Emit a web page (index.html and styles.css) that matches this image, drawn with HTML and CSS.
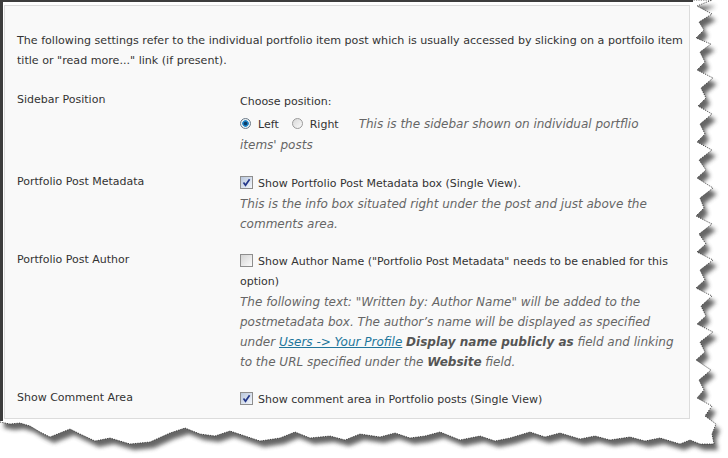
FILE: index.html
```html
<!DOCTYPE html>
<html>
<head>
<meta charset="utf-8">
<link rel="stylesheet" href="styles.css">
</head>
<body>
<svg class="torn" width="728" height="458" viewBox="0 0 728 458">
  <defs>
    <filter id="blur" x="-10%" y="-10%" width="120%" height="120%">
      <feGaussianBlur stdDeviation="2.2"/>
    </filter>
  </defs>
  <path class="shadow" filter="url(#blur)" transform="translate(4,6)" d="M0,0 L712,0 L697,6 L712,14 L699,22 L704,30 L696,38 L711,44 L700,52 L705,62 L697,70 L713,78 L701,88 L706,98 L698,106 L712,114 L700,124 L705,134 L697,142 L712,150 L699,160 L706,170 L697,178 L713,188 L700,198 L704,208 L696,216 L712,224 L699,234 L706,244 L697,252 L713,260 L700,270 L705,280 L696,288 L712,296 L701,306 L706,316 L697,324 L713,332 L700,342 L705,352 L696,360 L711,370 L699,380 L704,390 L697,398 L712,406 L705,416 L716,424 L712,434 L714,444 L700,444 L690,440 L680,444 L660,438 L645,441 L630,437 L610,440 L595,436 L580,439 L560,433 L545,437 L530,432 L510,438 L495,441 L480,436 L460,440 L440,432 L425,436 L410,438 L395,433 L380,437 L360,434 L345,440 L330,436 L310,438 L295,432 L280,438 L260,441 L245,436 L230,431 L215,436 L200,434 L185,428 L170,433 L150,442 L130,444 L110,438 L95,441 L80,434 L70,429 L60,433 L50,437 L40,432 L30,426 L20,423 L10,424 L0,422 Z"/>
  <path class="paper" d="M0,0 L712,0 L697,6 L712,14 L699,22 L704,30 L696,38 L711,44 L700,52 L705,62 L697,70 L713,78 L701,88 L706,98 L698,106 L712,114 L700,124 L705,134 L697,142 L712,150 L699,160 L706,170 L697,178 L713,188 L700,198 L704,208 L696,216 L712,224 L699,234 L706,244 L697,252 L713,260 L700,270 L705,280 L696,288 L712,296 L701,306 L706,316 L697,324 L713,332 L700,342 L705,352 L696,360 L711,370 L699,380 L704,390 L697,398 L712,406 L705,416 L716,424 L712,434 L714,444 L700,444 L690,440 L680,444 L660,438 L645,441 L630,437 L610,440 L595,436 L580,439 L560,433 L545,437 L530,432 L510,438 L495,441 L480,436 L460,440 L440,432 L425,436 L410,438 L395,433 L380,437 L360,434 L345,440 L330,436 L310,438 L295,432 L280,438 L260,441 L245,436 L230,431 L215,436 L200,434 L185,428 L170,433 L150,442 L130,444 L110,438 L95,441 L80,434 L70,429 L60,433 L50,437 L40,432 L30,426 L20,423 L10,424 L0,422 Z"/>
</svg>

<div class="frame">
  <div class="panel">
    <p class="intro">The following settings refer to the individual portfolio item post which is usually accessed by slicking on a portfoilo item title or "read more..." link (if present).</p>

    <div class="form">
      <div class="label">Sidebar Position</div>
      <div class="value">
        <div class="choose">Choose position:</div>
        <div class="radios"><span class="rd on"></span><span class="rlabel">Left</span><span class="rd"></span><span class="rlabel">Right</span><span class="desc inline">This is the sidebar shown on individual portflio items' posts</span></div>
      </div>

      <div class="label">Portfolio Post Metadata</div>
      <div class="value">
        <div><span class="cb on"><svg width="11" height="11" viewBox="0 0 11 11"><path d="M2.5 5.5 L4.5 8.2 L8.6 2.3" fill="none" stroke="#23378a" stroke-width="1.7"/></svg></span>Show Portfolio Post Metadata box (Single View).</div>
        <div class="desc">This is the info box situated right under the post and just above the comments area.</div>
      </div>

      <div class="label">Portfolio Post Author</div>
      <div class="value">
        <div><span class="cb"></span>Show Author Name ("Portfolio Post Metadata" needs to be enabled for this option)</div>
        <div class="desc">The following text: "Written by: Author Name" will be added to the postmetadata box. The author’s name will be displayed as specified under <a href="#">Users -&gt; Your Profile</a> <b>Display name publicly as</b> field and linking to the URL specified under the <b>Website</b> field.</div>
      </div>

      <div class="label">Show Comment Area</div>
      <div class="value">
        <div><span class="cb on"><svg width="11" height="11" viewBox="0 0 11 11"><path d="M2.5 5.5 L4.5 8.2 L8.6 2.3" fill="none" stroke="#23378a" stroke-width="1.7"/></svg></span>Show comment area in Portfolio posts (Single View)</div>
      </div>
    </div>
  </div>
</div>
</body>
</html>
```

FILE: styles.css
```css
html, body {
  margin: 0;
  padding: 0;
  background: #fff;
}

body {
  position: relative;
  width: 728px;
  height: 458px;
  overflow: hidden;
  font-family: "DejaVu Sans", Verdana, sans-serif;
  font-size: 11px;
  line-height: 20px;
  color: #333;
}

.torn {
  position: absolute;
  left: 0;
  top: 0;
  z-index: 0;
}

.torn .shadow {
  fill: #555;
  opacity: 0.9;
}

.torn .paper {
  fill: #fff;
  stroke: #2a2a2a;
  stroke-width: 0.8;
  stroke-dasharray: 1.2 1.2;
}

.frame {
  position: relative;
  z-index: 1;
  width: 693px;
  height: 421px;
  border-top: 2px solid #3d3d3d;
  border-left: 3px solid #3d3d3d;
  padding: 3px 0 0 1px;
  box-sizing: border-box;
}

.panel {
  width: 686px;
  height: 414px;
  box-sizing: border-box;
  background: #f9f9f9;
  border: 1px solid #dcdcdc;
  padding: 25px 0 0 12px;
}

.intro {
  margin: 0;
  width: 674px;
  font-size: 11.1px;
}

.form {
  display: grid;
  grid-template-columns: 223px 436px;
  row-gap: 16px;
  margin-top: 19px;
}

.value {
  padding-top: 2px;
}

.choose {
  height: 22px;
}

.desc {
  font-style: italic;
  font-size: 12px;
  color: #666;
}

.desc b {
  color: #555;
}

.desc a {
  color: #21759b;
}

.rd {
  display: inline-block;
  width: 11px;
  height: 11px;
  box-sizing: border-box;
  border: 1px solid #9a9a9a;
  border-radius: 50%;
  vertical-align: -1px;
  background: linear-gradient(135deg, #d8d8d8, #fafafa);
  margin-right: 7px;
}

.rd.on {
  border-color: #6b7a88;
  background: radial-gradient(circle, #0b3a63 0 1.3px, #1f7fc0 2.2px, #2a8fd0 3px, #e8eef2 3.6px, #f4f4f4 100%);
}

.rlabel {
  margin-right: 13px;
}

.rlabel + .desc {
  margin-left: 7px;
}

.cb {
  display: inline-block;
  width: 13px;
  height: 13px;
  box-sizing: border-box;
  border: 1px solid #8e8e8e;
  background: linear-gradient(135deg, #d4d4d4, #fbfbfb);
  vertical-align: -2px;
  margin-right: 5px;
}

.cb.on {
  background: linear-gradient(135deg, #b8c6dc, #f4f7fb);
}

.cb svg {
  display: block;
}
```
